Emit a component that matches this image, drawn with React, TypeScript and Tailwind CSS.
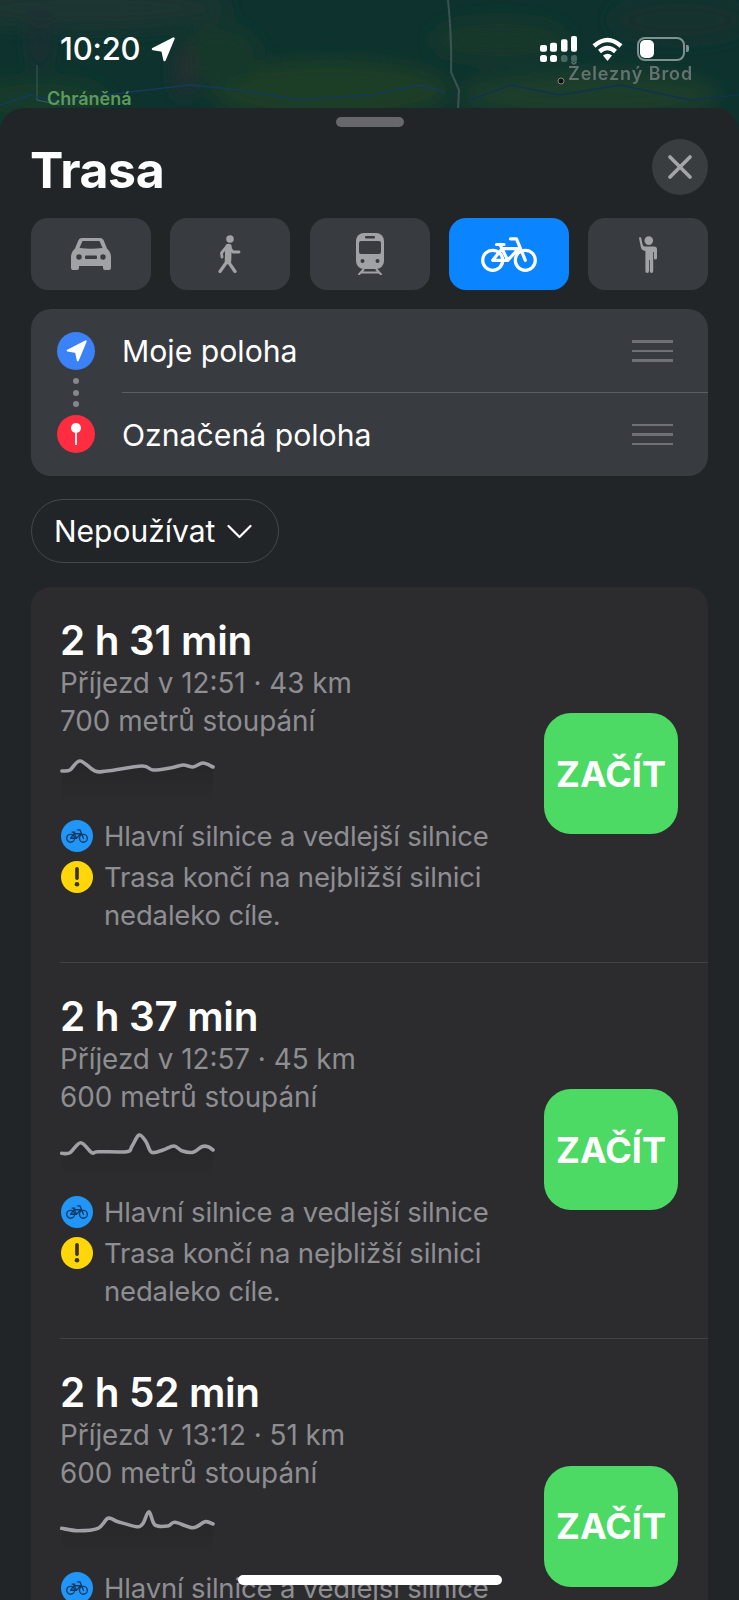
import React from "react";

type Pt = [number, number];

function smooth(p: Pt[]): string {
  let d = `M${p[0][0]} ${p[0][1]}`;
  for (let i = 0; i < p.length - 1; i++) {
    const a = p[Math.max(0, i - 1)];
    const b = p[i];
    const c = p[i + 1];
    const e = p[Math.min(p.length - 1, i + 2)];
    const c1x = b[0] + (c[0] - a[0]) / 6;
    const c1y = b[1] + (c[1] - a[1]) / 6;
    const c2x = c[0] - (e[0] - b[0]) / 6;
    const c2y = c[1] - (e[1] - b[1]) / 6;
    d += ` C${c1x.toFixed(1)} ${c1y.toFixed(1)} ${c2x.toFixed(1)} ${c2y.toFixed(1)} ${c[0]} ${c[1]}`;
  }
  return d;
}

function Elevation({ points, id }: { points: Pt[]; id: string }) {
  const line = smooth(points);
  const last = points[points.length - 1];
  const area = `${line} L${last[0]} 48 L${points[0][0]} 48 Z`;
  return (
    <svg width="156" height="50" viewBox="0 0 156 50" className="block">
      <defs>
        <linearGradient id={id} x1="0" y1="0" x2="0" y2="1">
          <stop offset="0" stopColor="#000" stopOpacity="0.14" />
          <stop offset="1" stopColor="#000" stopOpacity="0" />
        </linearGradient>
      </defs>
      <path d={area} fill={`url(#${id})`} />
      <path d={line} fill="none" stroke="#a0a0a5" strokeWidth="3.6" strokeLinecap="round" strokeLinejoin="round" />
    </svg>
  );
}

function Arrow({ className, fill = "#fff" }: { className?: string; fill?: string }) {
  return (
    <svg viewBox="0 0 24 25" className={className}>
      <path d="M22.5 1.5 L2 12 L11.5 13.5 L13.5 23 Z" fill={fill} stroke={fill} strokeWidth="2.4" strokeLinejoin="round" />
    </svg>
  );
}

function Bike({ className, color, sw }: { className?: string; color: string; sw: number }) {
  return (
    <svg viewBox="0 0 56 35" className={className} fill="none" stroke={color} strokeWidth={sw} strokeLinecap="round" strokeLinejoin="round">
      <circle cx="11.7" cy="23.3" r="10" />
      <circle cx="44.3" cy="23.3" r="10" />
      <path d="M11.7 23.3 H26.7 L37.7 11.7 H21 L11.7 23.3 M19 7.5 L26.7 23.3 M15.5 7.5 H23 M29.5 1.8 H35.5 L44.3 23.3" />
    </svg>
  );
}

function Car() {
  return (
    <svg width="40" height="32" viewBox="0 0 40 32">
      <path
        d="M7.5 2 Q8.5 0 11 0 H29 Q31.5 0 32.5 2 L36 10.5 Q40 14 40 19 V30 Q40 32 38 32 H34 Q32 32 32 30 V28 H8 V30 Q8 32 6 32 H2 Q0 32 0 30 V19 Q0 14 4 10.5 Z"
        fill="#a0a2a6"
      />
      <path d="M8.5 10 L11.5 3 H28.5 L31.5 10 Q20 11.5 8.5 10 Z" fill="#383b3f" />
      <circle cx="8" cy="19" r="2.7" fill="#383b3f" />
      <circle cx="32" cy="19" r="2.7" fill="#383b3f" />
      <rect x="14" y="17.5" width="12" height="3.4" rx="1" fill="#383b3f" />
    </svg>
  );
}

function Walk() {
  return (
    <svg width="24" height="38" viewBox="0 0 24 38" fill="none" stroke="#a0a2a6" strokeLinecap="round" strokeLinejoin="round">
      <circle cx="12" cy="4" r="3.8" fill="#a0a2a6" stroke="none" />
      <path d="M10.5 12 L10 26" strokeWidth="6.5" />
      <path d="M8 12.5 L3.5 18 L4 22" strokeWidth="2.8" />
      <path d="M12 13 L15 17 H21" strokeWidth="2.8" />
      <path d="M10.5 27 L17 36.5" strokeWidth="3.2" />
      <path d="M8 28 L2 36.5" strokeWidth="3.2" />
    </svg>
  );
}

function Train() {
  return (
    <svg width="28" height="42" viewBox="0 0 28 42">
      <rect x="0" y="0" width="28" height="36" rx="8" fill="#a0a2a6" />
      <rect x="9" y="3" width="10" height="2.5" rx="1" fill="#383b3f" />
      <rect x="3" y="8" width="22" height="13" rx="2" fill="#383b3f" />
      <circle cx="6.5" cy="28" r="2" fill="#383b3f" />
      <circle cx="21.5" cy="28" r="2" fill="#383b3f" />
      <path d="M8 36 L2.5 42 M20 36 L25.5 42 M5 39.5 H23" stroke="#a0a2a6" strokeWidth="2" fill="none" />
    </svg>
  );
}

function Wave() {
  return (
    <svg width="18" height="37" viewBox="0 0 18 37" fill="#a0a2a6">
      <circle cx="9.8" cy="4.6" r="4.3" />
      <path d="M0 2 Q1 0 2.2 2 L3.6 8.5 Q4 10.5 6 10.5 H15 Q18 10.5 18 13.5 V22 Q18 23.5 16.5 23.5 Q15 23.5 15 22 V16 H14.2 V35 Q14.2 37 12.5 37 Q10.8 37 10.8 35 V24 H10 V35 Q10 37 8.2 37 Q6.4 37 6.4 35 V15 Q2.4 14.5 1.8 11 Z" />
    </svg>
  );
}

function TransportButton({ active, children }: { active?: boolean; children: React.ReactNode }) {
  return (
    <div className={`w-[120px] h-[72px] rounded-[17px] flex items-center justify-center ${active ? "bg-[#0a84ff]" : "bg-[#383b3f]"}`}>
      {children}
    </div>
  );
}

function DragHandle() {
  return (
    <div className="w-[41px] flex flex-col gap-[7px]">
      <div className="h-[2.5px] bg-[#6f7174]" />
      <div className="h-[2.5px] bg-[#6f7174]" />
      <div className="h-[2.5px] bg-[#6f7174]" />
    </div>
  );
}

function RouteRow({ time, arrive, climb, points, id, divider, warning }: { time: string; arrive: string; climb: string; points: Pt[]; id: string; divider: boolean; warning: boolean }) {
  return (
    <div className={`ml-[29px] h-[376px] shrink-0 flex items-center pr-[30px] pb-[2px] ${divider ? "border-b border-[#414244]" : ""}`}>
      <div className="flex-1 self-start pt-[31px]">
        <div className="text-[40.4px] leading-[46px] font-semibold text-white tracking-[-0.3px]">{time}</div>
        <div className="text-[27.8px] leading-[38px] text-[#8e8e93]">{arrive}</div>
        <div className="text-[27.8px] leading-[38px] text-[#8e8e93]">{climb}</div>
        <div className="mt-[15px] h-[62px]">
          <Elevation points={points} id={id} />
        </div>
        <div className="flex items-center h-[38px]">
          <div className="w-[32px] h-[32px] rounded-full bg-[#2196f8] flex items-center justify-center ml-px">
            <Bike className="w-[22px] h-[14px]" color="#123b63" sw={3.4} />
          </div>
          <div className="ml-[11px] text-[27.5px] leading-[38px] text-[#8e8e93] whitespace-nowrap tracking-[-0.17px]">Hlavní silnice a vedlejší silnice</div>
        </div>
        {warning && (
          <div className="flex mt-[3px]">
            <div className="w-[32px] h-[32px] mt-[3px] rounded-full bg-[#ffd60a] flex items-center justify-center ml-px shrink-0">
              <svg width="6" height="20" viewBox="0 0 6 20" fill="#3a3000">
                <rect x="1.2" y="0" width="3.6" height="13" rx="1.8" />
                <circle cx="3" cy="17.2" r="2.3" />
              </svg>
            </div>
            <div className="ml-[11px] text-[27.5px] leading-[38px] text-[#8e8e93] whitespace-nowrap tracking-[-0.17px]">
              Trasa končí na nejbližší silnici
              <br />
              nedaleko cíle.
            </div>
          </div>
        )}
      </div>
      <div className="w-[134px] h-[121px] shrink-0 rounded-[27px] bg-[#4cd964] flex items-center justify-center text-white text-[36px] font-bold">
        ZAČÍT
      </div>
    </div>
  );
}

const p1: Pt[] = [[2, 16], [10, 15], [20, 6], [35, 16], [47, 16], [82, 11], [93, 15], [110, 13], [123, 10], [133, 12], [143, 8], [153, 12]];
const p2: Pt[] = [[1.7, 22.3], [10, 21.7], [20.7, 11.7], [31.7, 21.7], [38, 20.7], [66.7, 20.7], [71.7, 15.7], [79, 4], [86, 10.7], [91.7, 21.3], [103, 19], [114, 15], [121.7, 19.7], [133, 21.3], [141.7, 15.7], [148, 15.7], [153, 19]];
const p3: Pt[] = [[1.7, 21.3], [18, 23.7], [38, 21.3], [48, 11.3], [58, 14.7], [76.7, 19.7], [83, 16.3], [89, 4.7], [95, 18], [108, 19], [115, 15.3], [133, 20.7], [145, 14.7], [153, 17]];

export default function App() {
  return (
    <div className="relative w-[739px] h-[1600px] overflow-hidden bg-[#0f332d] [font-family:Inter,'Liberation_Sans',sans-serif]">
      {/* map */}
      <svg className="absolute left-0 top-0" width="739" height="130" viewBox="0 0 739 130">
        <defs>
          <filter id="soft" x="-20%" y="-20%" width="140%" height="140%">
            <feGaussianBlur stdDeviation="9" />
          </filter>
        </defs>
        <rect width="739" height="130" fill="#0e332e" />
        <g filter="url(#soft)">
          <ellipse cx="90" cy="8" rx="140" ry="22" fill="#1a3530" />
          <ellipse cx="330" cy="90" rx="120" ry="30" fill="#1a3c28" />
          <ellipse cx="590" cy="95" rx="130" ry="24" fill="#1c3e29" />
          <ellipse cx="40" cy="100" rx="70" ry="22" fill="#163b2c" />
          <ellipse cx="220" cy="55" rx="40" ry="30" fill="#13382c" />
          <ellipse cx="500" cy="40" rx="70" ry="22" fill="#16372c" />
          <ellipse cx="680" cy="20" rx="70" ry="22" fill="#19322d" />
          <ellipse cx="185" cy="70" rx="10" ry="28" fill="#282e30" />
          <ellipse cx="40" cy="40" rx="10" ry="30" fill="#1c2e30" />
        </g>
        <path d="M448 0 Q452 40 451 72 L459 90 L458 110" fill="none" stroke="#5d6d72" strokeWidth="2" opacity="0.55" />
        <path d="M37 65 V100 L60 105" fill="none" stroke="#5d7078" strokeWidth="1" opacity="0.6" />
        <path d="M0 105 L30 95 L60 102 L130 92 L190 85 L240 90 L300 100 L370 95 L420 85 L445 92" fill="none" stroke="#143a5c" strokeWidth="1.5" />
        <path d="M470 100 L510 85 L560 95 L620 85 L690 100 L739 95" fill="none" stroke="#0f3350" strokeWidth="1.5" />
        <circle cx="561" cy="81" r="3" fill="#101010" stroke="#7c8a85" strokeWidth="1" />
      </svg>
      <div className="absolute left-[568px] top-[63px] text-[18px] leading-[22px] font-semibold tracking-[0.9px] text-[#66726f] blur-[0.4px]">Železný Brod</div>
      <div className="absolute left-[47px] top-[88px] text-[18px] leading-[22px] font-semibold text-[#5f9a58]">Chráněná</div>

      {/* status bar */}
      <div className="relative h-[108px] overflow-visible">
        <div className="absolute left-[60px] top-[31px] flex items-center gap-[11px]">
          <span className="text-white text-[31px] leading-[36px] font-medium tracking-[-0.2px]">10:20</span>
          <Arrow className="w-[24px] h-[25px]" />
        </div>
        <div className="absolute left-[540px] top-[36px] flex items-start">
          <svg width="37" height="26" viewBox="0 0 37 26" fill="#fff">
            <rect x="0" y="9" width="7" height="6.7" rx="2" />
            <rect x="10" y="6.7" width="7" height="9" rx="2" />
            <rect x="21" y="3.3" width="6.5" height="12.4" rx="2" />
            <rect x="31" y="0" width="6" height="15.7" rx="2" />
            <rect x="0" y="19" width="7" height="7" rx="2.5" />
            <rect x="10" y="19" width="7" height="7" rx="2.5" />
            <rect x="21" y="19" width="6.5" height="7" rx="2.5" opacity="0.25" />
            <rect x="31" y="19" width="6" height="7" rx="2.5" opacity="0.25" />
          </svg>
          <svg className="ml-[15px] mt-[1px]" width="31" height="24" viewBox="0 0 31 24" fill="none" stroke="#fff" strokeWidth="4.4">
            <path d="M2 9 Q15.5 -3 29 9" />
            <path d="M7.5 14.5 Q15.5 7.5 23.5 14.5" />
            <path d="M11 18.5 Q15.5 15 20 18.5 L15.5 24 Z" fill="#fff" stroke="none" />
          </svg>
          <div className="ml-[14px] mt-[1px] w-[48px] h-[24px] rounded-[8px] border-2 border-[#ffffff77] p-[1px]">
            <div className="w-[14px] h-full rounded-[5px] bg-white" />
          </div>
          <div className="ml-[1px] mt-[9px] w-[3px] h-[7px] rounded-r-[2px] bg-[#ffffff77]" />
        </div>
      </div>

      {/* sheet */}
      <div className="relative rounded-t-[24px] bg-[#222527] px-[31px] pt-[9px] flex flex-col">
        <div className="w-[68px] h-[10px] rounded-full bg-[#66686c] self-center" />
        <div className="mt-[12px] h-[56px] flex items-start justify-between">
          <div className="mt-[3px] -ml-px text-[50px] leading-[56px] font-bold text-white tracking-[-0.4px]">Trasa</div>
          <div className="w-[56px] h-[56px] rounded-full bg-[#3a3d40] flex items-center justify-center">
            <svg width="24" height="24" viewBox="0 0 24 24" stroke="#a3a5a8" strokeWidth="3.6" strokeLinecap="round">
              <path d="M2 2 L22 22 M22 2 L2 22" />
            </svg>
          </div>
        </div>

        <div className="mt-[23px] flex justify-between">
          <TransportButton><Car /></TransportButton>
          <TransportButton><Walk /></TransportButton>
          <TransportButton><Train /></TransportButton>
          <TransportButton active><Bike className="w-[56px] h-[35px]" color="#fff" sw={3.2} /></TransportButton>
          <TransportButton><Wave /></TransportButton>
        </div>

        <div className="mt-[19px] h-[167px] rounded-[20px] bg-[#383b3f] flex overflow-hidden">
          <div className="w-[91px] pl-[26px] pt-[23px] flex flex-col">
            <div className="w-[38px] h-[38px] rounded-full bg-[#3b82f6] flex items-center justify-center">
              <Arrow className="w-[21px] h-[22px]" />
            </div>
            <div className="w-[38px] flex flex-col items-center gap-[5.5px] mt-[8px]">
              <div className="w-[6px] h-[6px] rounded-full bg-[#85878a]" />
              <div className="w-[6px] h-[6px] rounded-full bg-[#85878a]" />
              <div className="w-[6px] h-[6px] rounded-full bg-[#85878a]" />
            </div>
            <div className="w-[38px] h-[38px] mt-[8px] rounded-full bg-[#ff2d3f] flex items-center justify-center">
              <svg width="38" height="38" viewBox="0 0 38 38">
                <circle cx="19" cy="13" r="5" fill="#fff" />
                <rect x="18" y="15" width="2" height="15" fill="#fff" opacity="0.9" />
              </svg>
            </div>
          </div>
          <div className="flex-1 flex flex-col">
            <div className="h-[84px] flex items-center justify-between pr-[35px] border-b border-[#5d5f62] pt-[1px]">
              <span className="text-[30.2px] leading-[38px] text-white">Moje poloha</span>
              <DragHandle />
            </div>
            <div className="flex-1 flex items-center justify-between pr-[35px]">
              <span className="text-[30.2px] leading-[38px] text-white">Označená poloha</span>
              <DragHandle />
            </div>
          </div>
        </div>

        <div className="mt-[23px] w-[248px] h-[64px] rounded-full border border-[#45484b] flex items-center pl-[22px]">
          <span className="text-[30px] leading-[38px] text-white">Nepoužívat</span>
          <svg className="ml-[12px] mt-[1px]" width="25" height="15" viewBox="0 0 25 15" fill="none" stroke="#fff" strokeWidth="2.2" strokeLinecap="round" strokeLinejoin="round">
            <path d="M1.5 2 L12.5 13 L23.5 2" />
          </svg>
        </div>

        <div className="mt-[24px] rounded-t-[20px] bg-[#2c2c2e] flex flex-col">
          <RouteRow id="e1" time="2 h 31 min" arrive="Příjezd v 12:51 · 43 km" climb="700 metrů stoupání" points={p1} divider warning />
          <RouteRow id="e2" time="2 h 37 min" arrive="Příjezd v 12:57 · 45 km" climb="600 metrů stoupání" points={p2} divider warning />
          <RouteRow id="e3" time="2 h 52 min" arrive="Příjezd v 13:12 · 51 km" climb="600 metrů stoupání" points={p3} divider={false} warning={false} />
        </div>
      </div>

      {/* home indicator */}
      <div className="absolute left-[238px] top-[1575px] w-[264px] h-[10px] rounded-full bg-white" />
    </div>
  );
}
